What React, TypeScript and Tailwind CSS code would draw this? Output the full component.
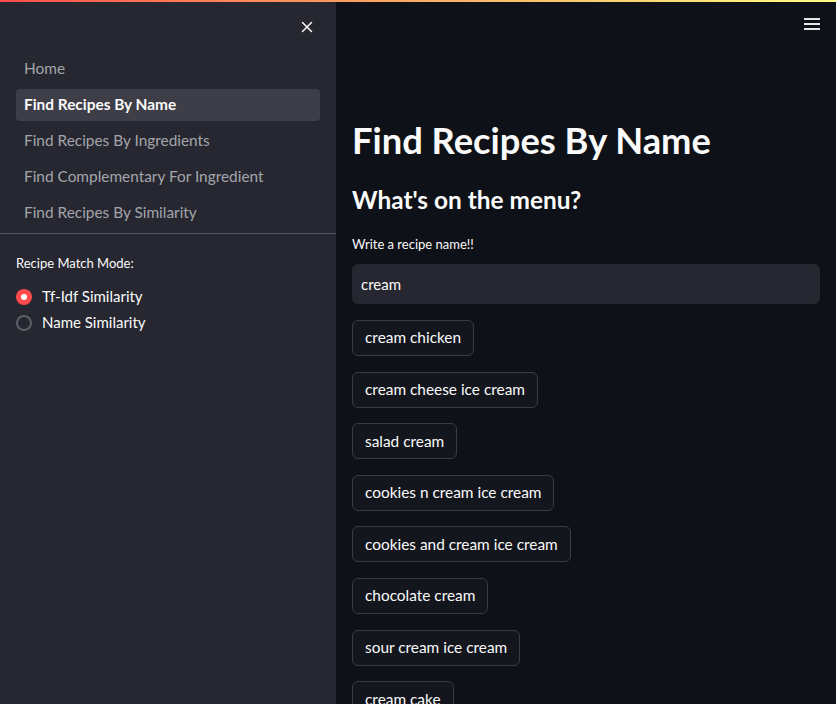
import { X } from 'lucide-react';

const navItems = [
  'Home',
  'Find Recipes By Name',
  'Find Recipes By Ingredients',
  'Find Complementary For Ingredient',
  'Find Recipes By Similarity',
];

const results = [
  'cream chicken',
  'cream cheese ice cream',
  'salad cream',
  'cookies n cream ice cream',
  'cookies and cream ice cream',
  'chocolate cream',
  'sour cream ice cream',
  'cream cake',
];

export default function App() {
  return (
    <div
      className="relative flex h-[704px] w-[836px] overflow-hidden bg-[#0e1117] text-[#fafafa]"
      style={{ fontFamily: 'Lato, "Noto Sans", sans-serif' }}
    >
      {/* Top decoration */}
      <div className="absolute left-0 right-0 top-0 z-10 h-[2px] bg-gradient-to-r from-[#ff4b4b] to-[#fffd80]" />

      {/* Sidebar */}
      <aside className="flex w-[336px] shrink-0 flex-col bg-[#262730]">
        <div className="flex h-[53px] items-end justify-end pb-[13px] pr-[16px]">
          <button className="p-1 text-[#fafafa]">
            <X size={18} strokeWidth={2} />
          </button>
        </div>
        <nav className="flex flex-col gap-[4px] px-[16px]">
          {navItems.map((item) => {
            const active = item === 'Find Recipes By Name';
            return (
              <div
                key={item}
                className={`flex h-[32px] items-center rounded-[4px] px-[8px] text-[15.4px] ${
                  active ? 'bg-[#3d3e48] font-bold text-[#fafafa]' : 'text-[#a3a5ab]'
                }`}
              >
                {item}
              </div>
            );
          })}
        </nav>
        <div className="mt-[4px] h-px w-full bg-[#51525b]" />
        <div className="px-[16px] pt-[20px]">
          <div className="text-[13px] text-[#fafafa]">Recipe Match Mode:</div>
          <div className="mt-[15px] flex flex-col gap-[10px]">
            <label className="flex h-[16px] items-center gap-[10px] text-[15px]">
              <span className="flex h-[16px] w-[16px] items-center justify-center rounded-full bg-[#ff4b4b]">
                <span className="h-[6px] w-[6px] rounded-full bg-white" />
              </span>
              Tf-Idf Similarity
            </label>
            <label className="flex h-[16px] items-center gap-[10px] text-[15px]">
              <span className="h-[16px] w-[16px] rounded-full border-2 border-[#5d5f68]" />
              Name Similarity
            </label>
          </div>
        </div>
      </aside>

      {/* Main */}
      <main className="relative flex-1">
        <button className="absolute right-[16px] top-[18px] flex flex-col gap-[3px] p-0">
          <span className="h-[2px] w-[16px] bg-[#e6e6e6]" />
          <span className="h-[2px] w-[16px] bg-[#e6e6e6]" />
          <span className="h-[2px] w-[16px] bg-[#e6e6e6]" />
        </button>
        <div className="px-[16px] pt-[116px]">
          <h1 className="text-[36.3px] font-bold leading-[48px]">Find Recipes By Name</h1>
          <h2 className="mt-[19px] text-[24.4px] font-bold leading-[34px]">What's on the menu?</h2>
          <div className="mt-[17px] text-[13px] leading-[20px]">Write a recipe name!!</div>
          <div className="mt-[10px] flex h-[40px] items-center rounded-[6px] bg-[#262730] px-[9px] text-[15px]">
            cream
          </div>
          <div className="mt-[16px] flex flex-col items-start gap-[15.6px]">
            {results.map((r) => (
              <button
                key={r}
                className="flex h-[36px] items-center rounded-[6px] border border-[#3a3c44] bg-[#13161d] px-[12px] text-[15.4px] text-[#fafafa]"
              >
                {r}
              </button>
            ))}
          </div>
        </div>
      </main>
    </div>
  );
}
